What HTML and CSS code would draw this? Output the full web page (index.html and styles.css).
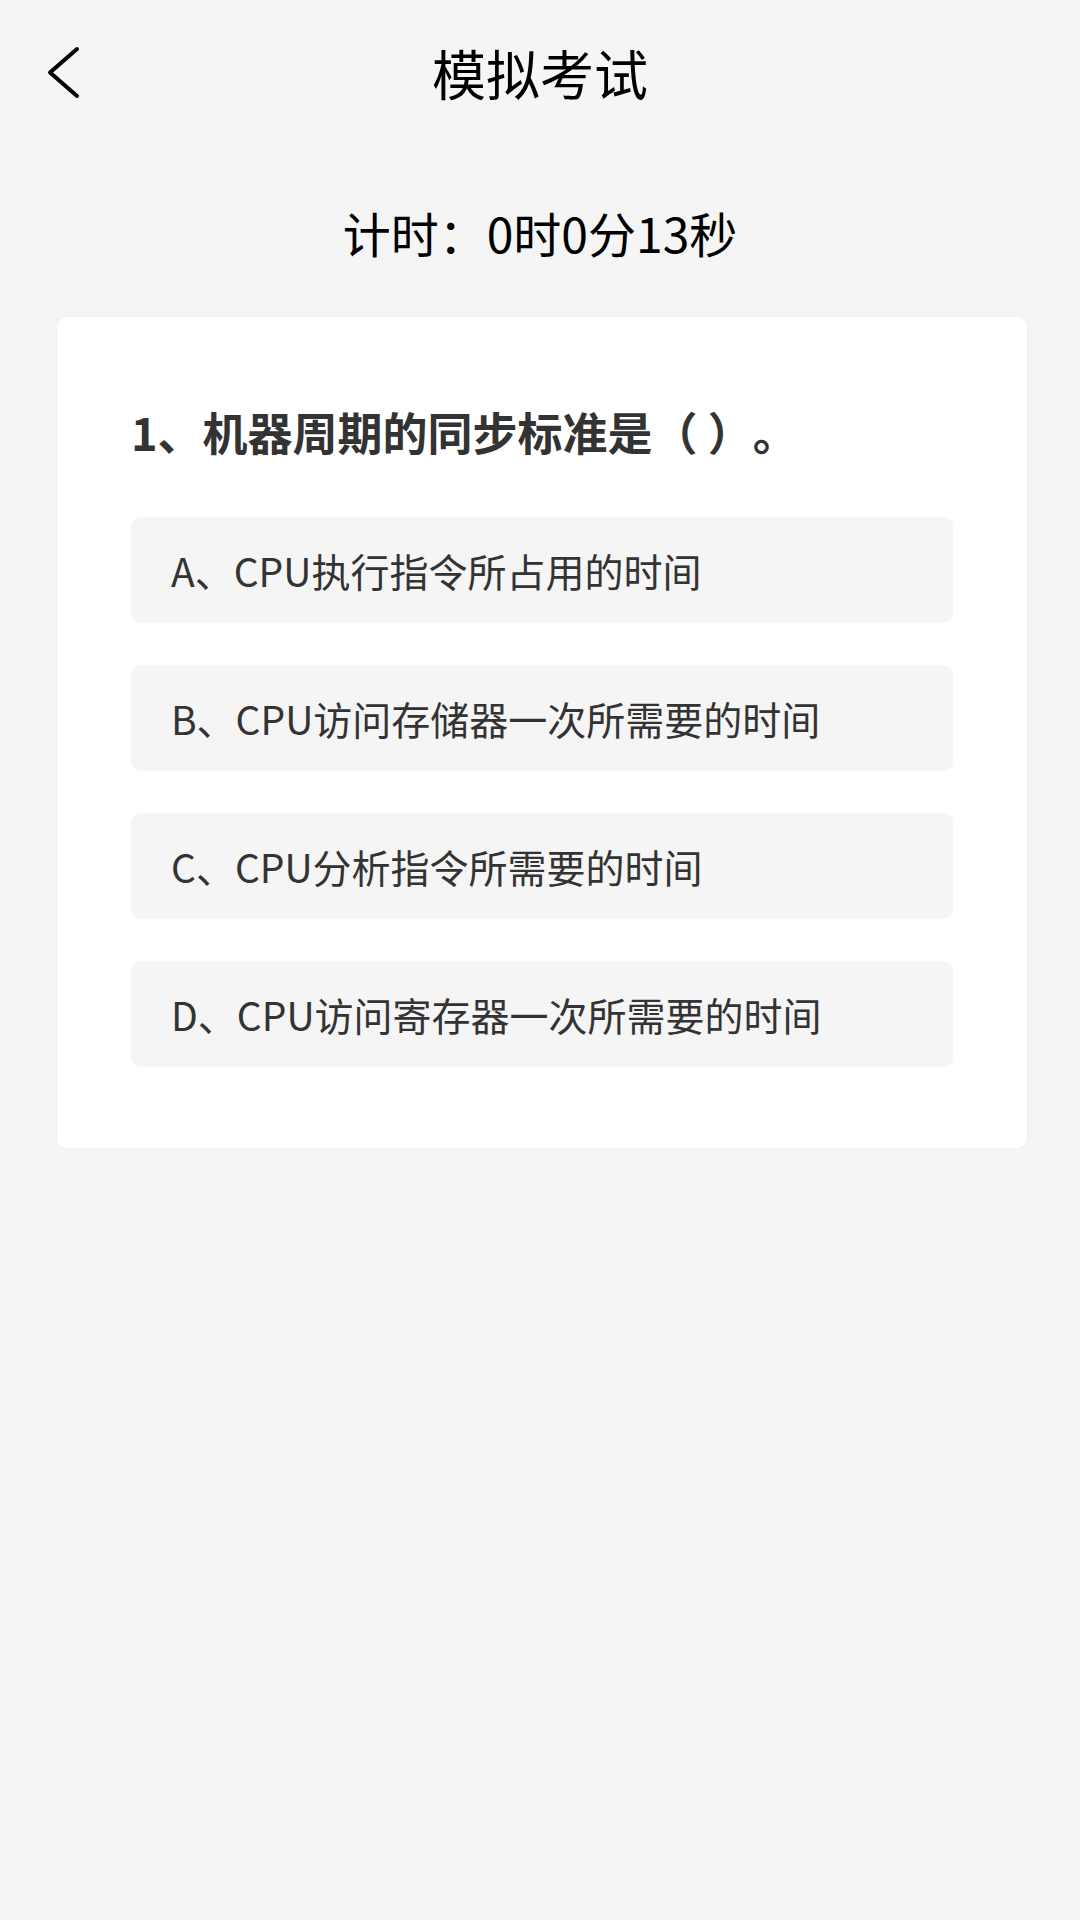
FILE: index.html
```html
<!DOCTYPE html>
<html lang="zh-CN">
<head>
    <meta charset="UTF-8">
    <meta name="viewport" content="width=device-width, initial-scale=1.0">
    <title>模拟考试</title>
    <link rel="stylesheet" href="styles.css">
</head>
<body>
    <!-- 顶部导航 -->
    <div class="header">
        <div class="back">
            <svg width="50" height="70" viewBox="0 0 50 70">
                <polyline points="37,11 10,34.5 37,58" fill="none" stroke="#000" stroke-width="4" stroke-linecap="round" stroke-linejoin="round"/>
            </svg>
        </div>
        <div class="title">模拟考试</div>
        <div></div>
    </div>

    <div class="timer">计时：0时0分13秒</div>

    <!-- 题目卡片 -->
    <div class="card">
        <div class="question">1、机器周期的同步标准是（ ）。</div>
        <div class="options">
            <div class="option">A、CPU执行指令所占用的时间</div>
            <div class="option">B、CPU访问存储器一次所需要的时间</div>
            <div class="option">C、CPU分析指令所需要的时间</div>
            <div class="option">D、CPU访问寄存器一次所需要的时间</div>
        </div>
    </div>
</body>
</html>
```

FILE: styles.css
```css
/* 页面基础样式 */
body {
    margin: 0;
    background-color: #f5f5f5;
    font-family: "Noto Sans CJK SC", "Noto Sans", sans-serif;
    color: #000;
    text-spacing-trim: space-all;
}

/* 顶部导航 */
.header {
    display: grid;
    grid-template-columns: 1fr auto 1fr;
    align-items: center;
    height: 146px;
}

.back {
    padding-left: 40px;
    display: flex;
    align-items: center;
}

.back svg {
    display: block;
}

.title {
    font-size: 54px;
    line-height: 60px;
    color: #000;
}

/* 计时 */
.timer {
    margin-top: 56px;
    text-align: center;
    font-size: 48px;
    line-height: 60px;
    color: #000;
}

/* 题目卡片 */
.card {
    margin: 55px 53px 0 57px;
    background-color: #fff;
    border-radius: 10px;
    padding: 85px 74px 81px 74px;
    box-shadow: 0 0 6px rgba(0, 0, 0, 0.03);
}

.question {
    font-size: 45px;
    line-height: 60px;
    font-weight: bold;
    color: #333;
}

.options {
    display: flex;
    flex-direction: column;
    gap: 42px;
    margin-top: 55px;
}

.option {
    height: 106px;
    display: flex;
    align-items: center;
    padding-left: 40px;
    background-color: #f5f5f5;
    border-radius: 10px;
    font-size: 39px;
    color: #333;
    box-shadow: 0 0 4px rgba(0, 0, 0, 0.02);
}
```
